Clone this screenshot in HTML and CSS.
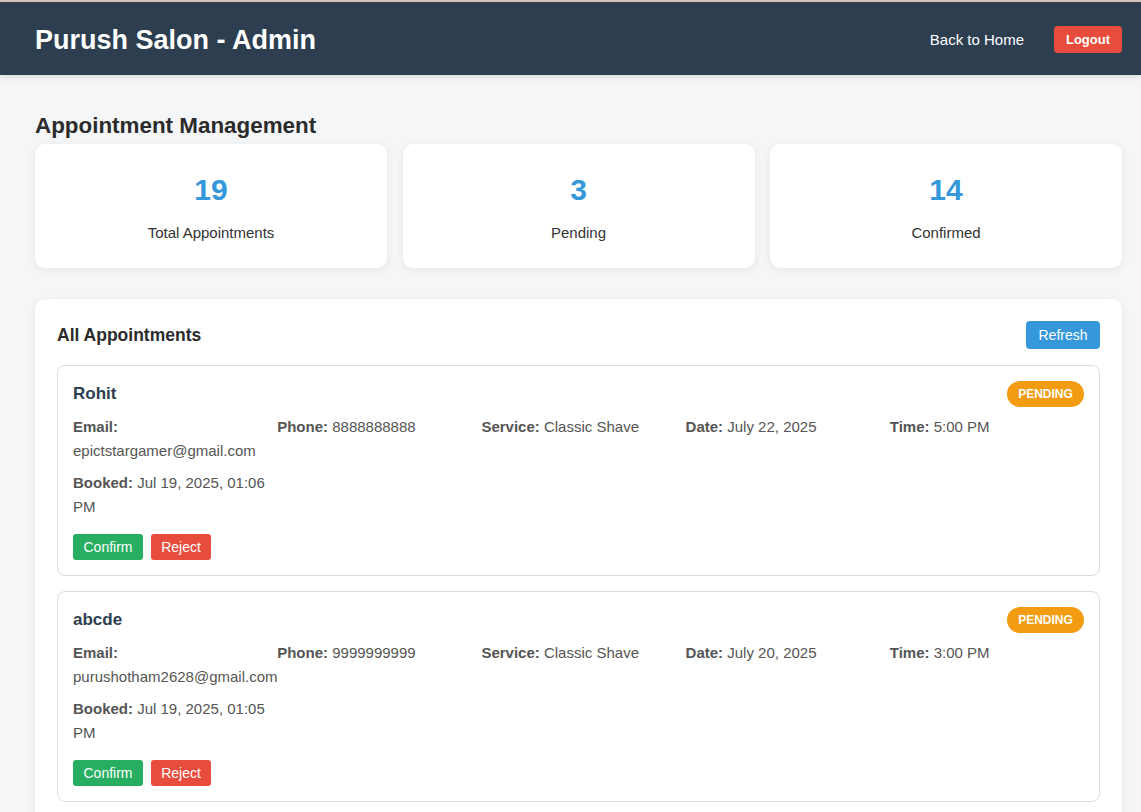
FILE: index.html
```html
<!DOCTYPE html>
<html lang="en">
<head>
<meta charset="utf-8">
<title>Purush Salon - Admin</title>
<link rel="stylesheet" href="styles.css">
</head>
<body>
<header class="topbar">
  <h1 class="brand">Purush Salon - Admin</h1>
  <nav class="nav">
    <a class="nav-link" href="#">Back to Home</a>
    <button class="btn-logout">Logout</button>
  </nav>
</header>
<main class="main">
  <h2 class="page-title">Appointment Management</h2>
  <section class="stats">
    <div class="stat-card"><div class="stat-num">19</div><div class="stat-label">Total Appointments</div></div>
    <div class="stat-card"><div class="stat-num">3</div><div class="stat-label">Pending</div></div>
    <div class="stat-card"><div class="stat-num">14</div><div class="stat-label">Confirmed</div></div>
  </section>
  <section class="panel">
    <div class="panel-head">
      <h3 class="panel-title">All Appointments</h3>
      <button class="btn-refresh">Refresh</button>
    </div>
    <div class="appt">
      <div class="appt-head">
        <span class="appt-name">Rohit</span>
        <span class="badge">PENDING</span>
      </div>
      <div class="details">
        <div class="item"><b>Email:</b> epictstargamer@gmail.com</div>
        <div class="item"><b>Phone:</b> 8888888888</div>
        <div class="item"><b>Service:</b> Classic Shave</div>
        <div class="item"><b>Date:</b> July 22, 2025</div>
        <div class="item"><b>Time:</b> 5:00 PM</div>
        <div class="item"><b>Booked:</b> Jul 19, 2025, 01:06 PM</div>
      </div>
      <div class="actions">
        <button class="btn-confirm">Confirm</button>
        <button class="btn-reject">Reject</button>
      </div>
    </div>
    <div class="appt">
      <div class="appt-head">
        <span class="appt-name">abcde</span>
        <span class="badge">PENDING</span>
      </div>
      <div class="details">
        <div class="item"><b>Email:</b> purushotham2628@gmail.com</div>
        <div class="item"><b>Phone:</b> 9999999999</div>
        <div class="item"><b>Service:</b> Classic Shave</div>
        <div class="item"><b>Date:</b> July 20, 2025</div>
        <div class="item"><b>Time:</b> 3:00 PM</div>
        <div class="item"><b>Booked:</b> Jul 19, 2025, 01:05 PM</div>
      </div>
      <div class="actions">
        <button class="btn-confirm">Confirm</button>
        <button class="btn-reject">Reject</button>
      </div>
    </div>
  </section>
</main>
</body>
</html>
```

FILE: styles.css
```css
* { box-sizing: border-box; }
html, body { margin: 0; padding: 0; }
body {
  font-family: "Liberation Sans", Arial, sans-serif;
  background: #f5f6f8;
  color: #333;
  border-top: 2px solid #d6c3bb;
}
.topbar {
  height: 73px;
  background: #2c3e50;
  display: flex;
  align-items: center;
  justify-content: space-between;
  padding: 0 19px 0 35px;
  box-shadow: 0 2px 6px rgba(0,0,0,0.12);
}
.brand {
  margin: 3px 0 0;
  color: #fff;
  font-size: 27px;
  font-weight: bold;
}
.nav { display: flex; align-items: center; gap: 30px; }
.nav-link { color: #fff; text-decoration: none; font-size: 15px; margin-top: 2px; }
.btn-logout {
  background: #e74c3c;
  color: #fff;
  border: none;
  border-radius: 4px;
  font-family: inherit;
  font-size: 13px;
  font-weight: bold;
  height: 27px;
  width: 68px;
  padding: 0;
  margin-top: 2px;
}
.main { padding: 37px 19px 20px 35px; }
.page-title {
  margin: 0 0 5px;
  font-size: 22.4px;
  line-height: 27px;
  font-weight: bold;
  color: #2b2b2b;
}
.stats {
  display: grid;
  grid-template-columns: repeat(3, minmax(0, 1fr));
  gap: 15.5px;
  margin-bottom: 31px;
}
.stat-card {
  background: #fff;
  border-radius: 10px;
  box-shadow: 0 2px 10px rgba(0,0,0,0.07);
  padding: 28px 20px 26px;
  text-align: center;
}
.stat-num {
  font-size: 30px;
  line-height: 36px;
  font-weight: bold;
  color: #3498db;
  margin-bottom: 16px;
}
.stat-label { font-size: 15px; line-height: 18px; color: #333; }
.panel {
  background: #fff;
  border-radius: 10px;
  box-shadow: 0 2px 10px rgba(0,0,0,0.07);
  padding: 22px;
}
.panel-head {
  display: flex;
  align-items: center;
  justify-content: space-between;
  height: 28px;
  margin-bottom: 16px;
}
.panel-title { margin: 0; font-size: 17.5px; font-weight: bold; color: #2b2b2b; }
.btn-refresh {
  background: #3498db;
  color: #fff;
  border: none;
  border-radius: 4px;
  font-family: inherit;
  font-size: 14px;
  height: 28px;
  width: 74px;
  padding: 0;
}
.appt {
  border: 1px solid #ddd;
  border-radius: 8px;
  padding: 15px;
  margin-bottom: 15px;
}
.appt-head {
  display: flex;
  align-items: center;
  justify-content: space-between;
  height: 26px;
  margin-bottom: 8px;
}
.appt-name { font-size: 17px; font-weight: bold; color: #2c3e50; }
.badge {
  background: #f39c12;
  color: #fff;
  font-size: 12px;
  font-weight: bold;
  border-radius: 13px;
  height: 26px;
  width: 77px;
  display: flex;
  align-items: center;
  justify-content: center;
}
.details {
  display: grid;
  grid-template-columns: repeat(5, minmax(0, 1fr));
  column-gap: 10px;
  row-gap: 8px;
  font-size: 15px;
  line-height: 24px;
  color: #555;
}
.details b { color: #555; }
.actions { display: flex; gap: 8px; margin-top: 15px; }
.actions button {
  border: none;
  border-radius: 3px;
  color: #fff;
  font-family: inherit;
  font-size: 14px;
  height: 26px;
  padding: 0;
}
.btn-confirm { background: #27ae60; width: 70px; }
.btn-reject { background: #e74c3c; width: 60px; }
```
